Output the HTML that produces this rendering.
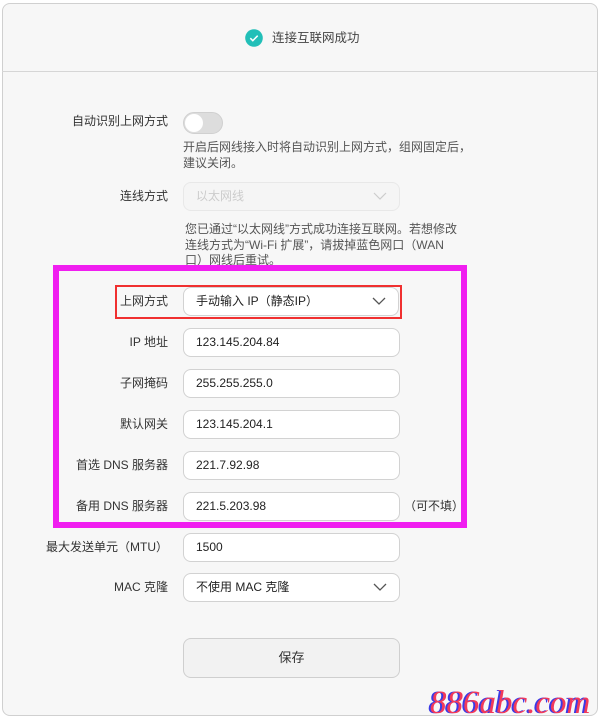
<!DOCTYPE html>
<html><head><meta charset="utf-8"><style>
*{margin:0;padding:0;box-sizing:border-box}
body{width:600px;height:721px;background:#fff;font-family:"Liberation Sans","Noto Sans CJK SC",sans-serif;font-size:12px;color:#333;position:relative;overflow:hidden}
.card{position:absolute;left:2px;top:3px;width:596px;height:713px;background:#f7f7f7;border:1px solid #d0d0d0;border-radius:8px}
.hr{position:absolute;left:2px;top:71px;width:596px;height:1px;background:#d6d6d6}
.a{position:absolute;white-space:nowrap;line-height:16px}
.r{text-align:right}
.in{position:absolute;background:#fff;border:1px solid #d2d2d2;border-radius:8px;padding-left:12px;line-height:27px;color:#222}
.chev{position:absolute;right:12px;top:9px}
.desc{color:#555;line-height:15.5px}
</style></head><body>
<div class="card"></div>
<div class="hr"></div>
<svg style="position:absolute;left:245px;top:29px" width="18" height="18" viewBox="0 0 18 18"><circle cx="9" cy="9" r="8.8" fill="#22bfb8"/><path d="M5.3 9.2l2.5 2.5L12.7 6.7" fill="none" stroke="#fff" stroke-width="1.5"/></svg>
<div class="a" style="left:272px;top:30px;font-size:12.5px;color:#444">连接互联网成功</div>

<div class="a r" style="left:30px;width:138px;top:113px">自动识别上网方式</div>
<div style="position:absolute;left:183px;top:112px;width:40px;height:22px;border-radius:11px;background:#ddd;border:1px solid #d0d0d0"></div>
<div style="position:absolute;left:185px;top:114px;width:18px;height:18px;border-radius:50%;background:#fff"></div>
<div class="a desc" style="left:183px;top:140px">开启后网线接入时将自动识别上网方式，组网固定后，<br>建议关闭。</div>

<div class="a r" style="left:30px;width:138px;top:188px">连线方式</div>
<div class="in" style="left:183px;top:182px;width:217px;height:29px;border-color:#e8e8e8;background:#f5f5f5;color:#ccc">以太网线<svg class="chev" width="14" height="8" viewBox="0 0 14 8"><path d="M1 1l6 6 6-6" fill="none" stroke="#ccc" stroke-width="1.2"/></svg></div>
<div class="a desc" style="left:185px;top:222px">您已通过“以太网线”方式成功连接互联网。若想修改<br>连线方式为“Wi-Fi 扩展”，请拔掉蓝色网口（WAN<br>口）网线后重试。</div>

<div style="position:absolute;left:53px;top:265px;width:414px;height:263px;border:6px solid #f01ef0;background:#f7f7f7"></div>
<div style="position:absolute;left:115px;top:285px;width:287px;height:34px;border:2px solid #f03030"></div>

<div class="a r" style="left:30px;width:138px;top:293px">上网方式</div>
<div class="in" style="left:183px;top:287px;width:216px;height:29px">手动输入 IP（静态IP）<svg class="chev" width="14" height="8" viewBox="0 0 14 8"><path d="M1 1l6 6 6-6" fill="none" stroke="#555" stroke-width="1.3"/></svg></div>
<div class="a r" style="left:30px;width:138px;top:334px">IP 地址</div>
<div class="in" style="left:183px;top:328px;width:217px;height:29px">123.145.204.84</div>
<div class="a r" style="left:30px;width:138px;top:375px">子网掩码</div>
<div class="in" style="left:183px;top:369px;width:217px;height:29px">255.255.255.0</div>
<div class="a r" style="left:30px;width:138px;top:416px">默认网关</div>
<div class="in" style="left:183px;top:410px;width:217px;height:29px">123.145.204.1</div>
<div class="a r" style="left:30px;width:138px;top:457px">首选 DNS 服务器</div>
<div class="in" style="left:183px;top:451px;width:217px;height:29px">221.7.92.98</div>
<div class="a r" style="left:30px;width:138px;top:498px">备用 DNS 服务器</div>
<div class="in" style="left:183px;top:492px;width:217px;height:29px">221.5.203.98</div>
<div class="a" style="left:404px;top:498px">（可不填）</div>

<div class="a r" style="left:30px;width:138px;top:539px">最大发送单元（MTU）</div>
<div class="in" style="left:183px;top:533px;width:217px;height:29px">1500</div>
<div class="a r" style="left:30px;width:138px;top:579px">MAC 克隆</div>
<div class="in" style="left:183px;top:573px;width:217px;height:29px">不使用 MAC 克隆<svg class="chev" width="14" height="8" viewBox="0 0 14 8"><path d="M1 1l6 6 6-6" fill="none" stroke="#555" stroke-width="1.3"/></svg></div>

<div style="position:absolute;left:183px;top:638px;width:217px;height:40px;border:1px solid #cfcfcf;border-radius:8px;background:#f2f2f2;text-align:center;line-height:38px;font-size:13px">保存</div>

<div class="a" style="left:430px;top:686px;font-family:'Liberation Serif',serif;font-style:italic;font-size:33px;line-height:34px;color:#f23a5a;text-shadow:-2px 0 0 #3a3ae6">886abc.com</div>
</body></html>
